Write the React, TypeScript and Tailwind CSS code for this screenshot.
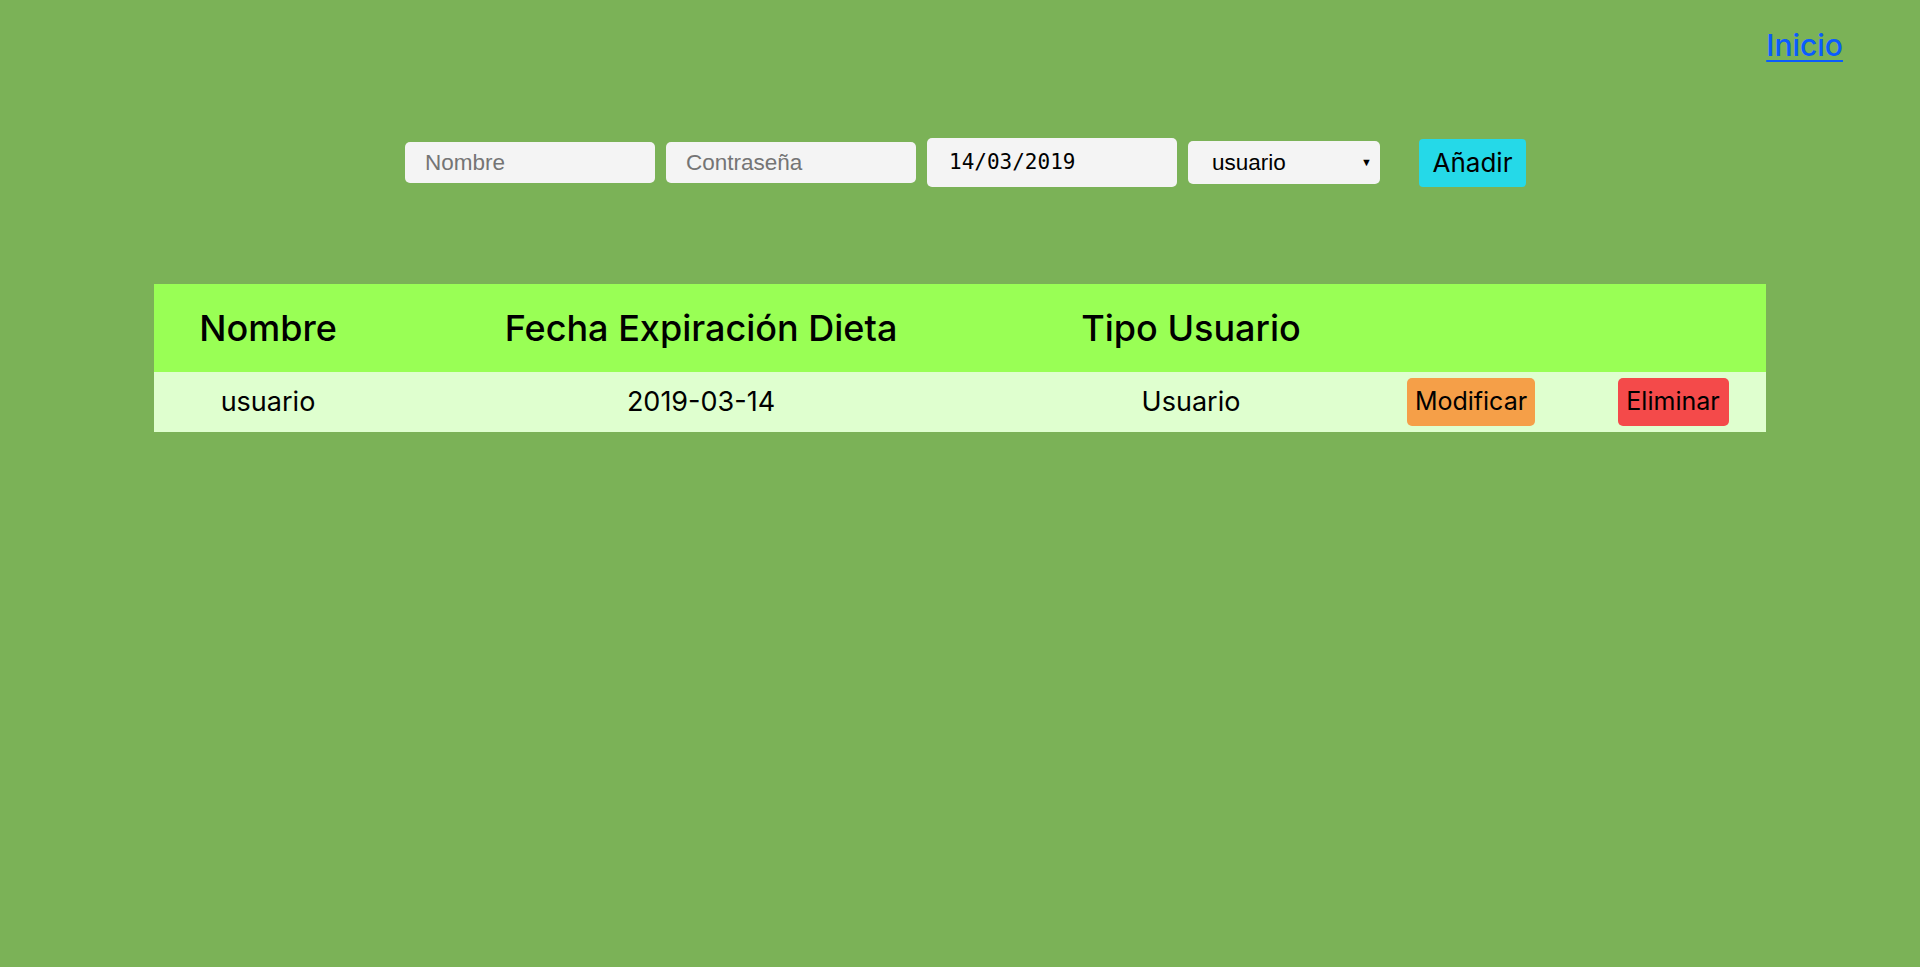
import React from 'react'

const rows = [{ id: 1, nombre: 'usuario', fecha: '2019-03-14', tipo: 'Usuario' }]

export default function App() {
  const sans = "font-['Inter','Noto_Sans',sans-serif]"

  return (
    <div className={`min-h-screen w-full bg-[#7bb257] ${sans}`}>
      {/* nav */}
      <div className="flex justify-end pr-[77px] pt-[25px]">
        <a href="#" className="text-[30px] leading-[40px] font-medium text-[#0a5cff] underline underline-offset-[4px] decoration-2">
          Inicio
        </a>
      </div>

      {/* form */}
      <div className="mt-[73px] flex items-center justify-center pl-[11px]">
        <input
          placeholder="Nombre"
          className="h-[41px] w-[250px] rounded-[5px] bg-[#f4f4f4] pl-[20px] font-['Liberation_Sans',Arial,sans-serif] text-[22.5px] text-black placeholder:text-[#757575] outline-none"
        />
        <input
          placeholder="Contraseña"
          className="ml-[11px] h-[41px] w-[250px] rounded-[5px] bg-[#f4f4f4] pl-[20px] font-['Liberation_Sans',Arial,sans-serif] text-[22.5px] text-black placeholder:text-[#757575] outline-none"
        />
        <div className="ml-[11px] flex h-[49px] w-[250px] items-center rounded-[5px] bg-[#f4f4f4] pl-[22px] font-['DejaVu_Sans_Mono',monospace] text-[21px] text-black">
          14/03/2019
        </div>
        <div className="ml-[11px] flex h-[43px] w-[192px] items-center justify-between rounded-[5px] bg-[#f4f4f4] pl-[24px] pr-[8px] font-['Liberation_Sans',Arial,sans-serif] text-[22.5px] text-black">
          <span>usuario</span>
          <span className="text-[11px]">▼</span>
        </div>
        <button className="ml-[39px] h-[48px] w-[107px] rounded-[4px] bg-[#25d9e8] text-[26px] text-black">
          Añadir
        </button>
      </div>

      {/* table */}
      <table className="mx-auto mt-[97px] w-[1612px] border-collapse text-center text-black">
        <thead>
          <tr className="h-[88px] bg-[#99ff55]">
            <th className="w-[228px] text-[36px] font-medium">Nombre</th>
            <th className="w-[638px] text-[36px] font-medium">Fecha Expiración Dieta</th>
            <th className="w-[342px] text-[36px] font-medium">Tipo Usuario</th>
            <th className="w-[218px]"></th>
            <th className="w-[186px]"></th>
          </tr>
        </thead>
        <tbody>
          {rows.map(r => (
            <tr key={r.id} className="h-[60px] bg-[#dfffcf] text-[27px]">
              <td>{r.nombre}</td>
              <td>{r.fecha}</td>
              <td>{r.tipo}</td>
              <td>
                <button className="h-[48px] w-[128px] rounded-[5px] bg-[#f59f48] text-[25px] text-black">
                  Modificar
                </button>
              </td>
              <td>
                <button className="h-[48px] w-[111px] rounded-[5px] bg-[#f44a4a] text-[25px] text-black">
                  Eliminar
                </button>
              </td>
            </tr>
          ))}
        </tbody>
      </table>
    </div>
  )
}
